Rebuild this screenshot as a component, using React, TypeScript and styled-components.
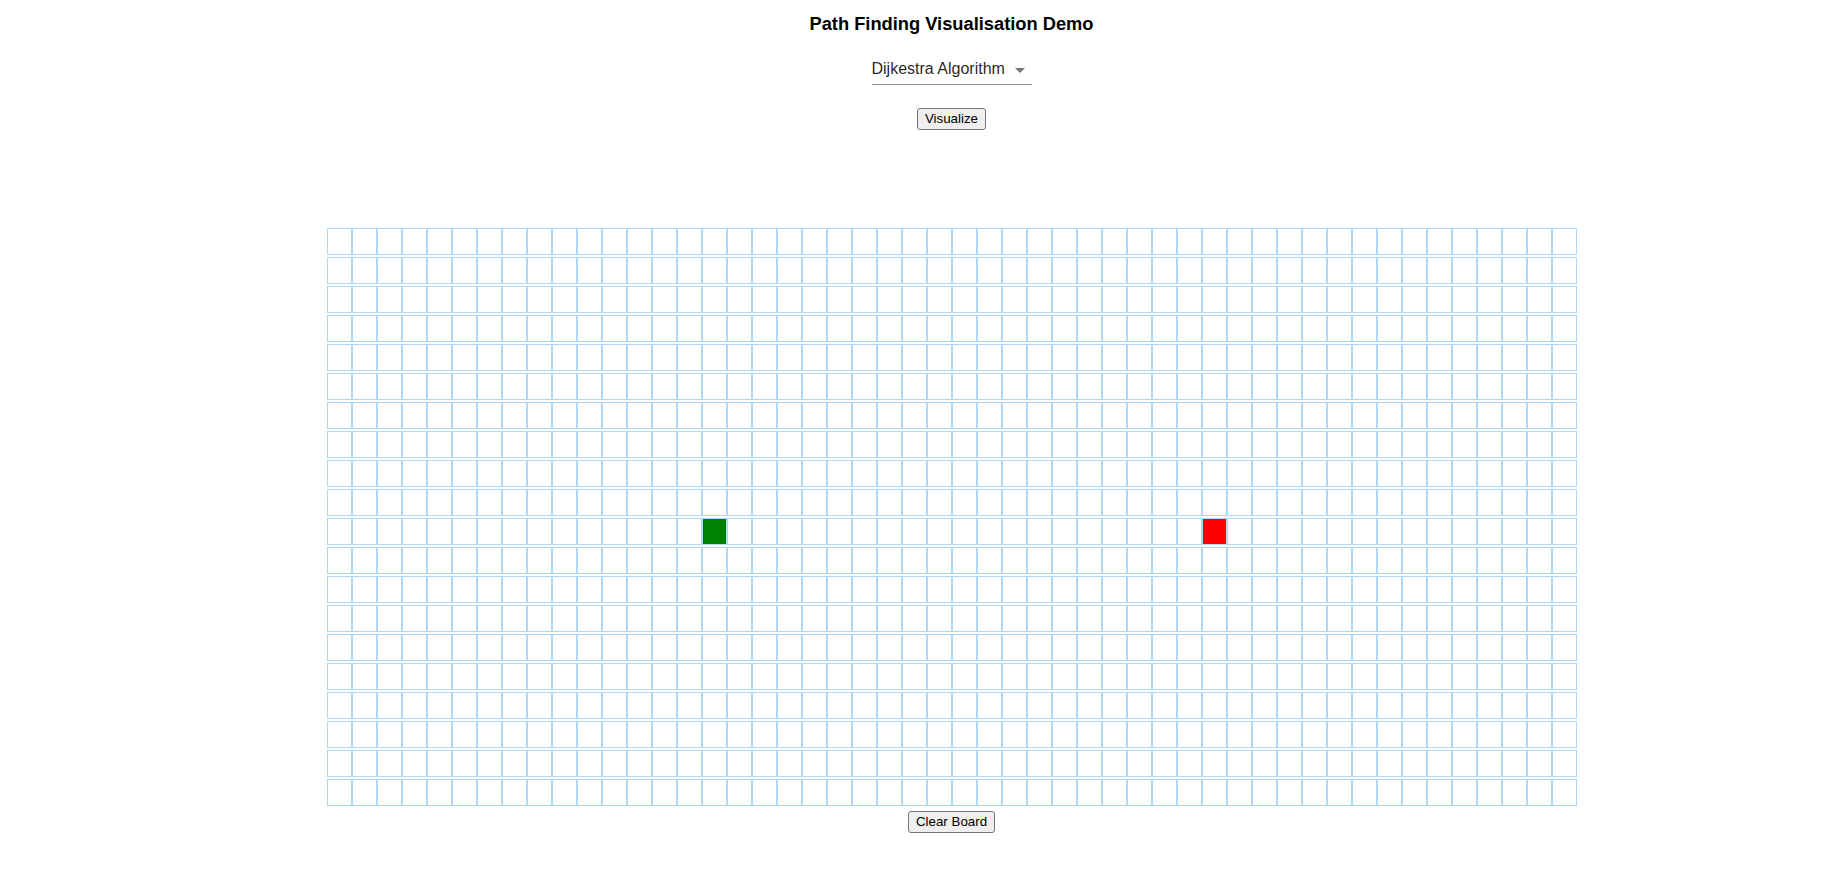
import React, { useState } from 'react';
import styled, { createGlobalStyle } from 'styled-components';

const GlobalStyle = createGlobalStyle`
  body {
    margin: 0;
    overflow: hidden;
    background: #ffffff;
    font-family: "Liberation Sans", Arial, sans-serif;
  }
`;

const ROWS = 20;
const COLS = 50;
const START = { row: 10, col: 15 };
const FINISH = { row: 10, col: 35 };

const Page = styled.div`
  width: 1903px;
  display: flex;
  flex-direction: column;
  align-items: center;
`;

const Title = styled.h3`
  margin: 13px 0 0;
  font-size: 18.3px;
  line-height: 22px;
  font-weight: 700;
  color: #000;
`;

const SelectRoot = styled.div`
  position: relative;
  width: 160px;
  margin-top: 21px;
  border-bottom: 1px solid rgba(0, 0, 0, 0.42);
  cursor: pointer;
`;

const SelectValue = styled.div`
  padding: 3px 24px 6px 0;
  font-size: 16px;
  line-height: 19px;
  color: rgba(0, 0, 0, 0.87);
  text-align: left;
  white-space: nowrap;
`;

const ArrowIcon = styled.svg`
  position: absolute;
  right: 0;
  top: calc(50% - 12px);
  width: 24px;
  height: 24px;
  fill: rgba(0, 0, 0, 0.54);
`;

const Button = styled.button<{ $mt: number }>`
  margin-top: ${p => p.$mt}px;
  padding: 2px 7px;
  font-family: "Liberation Sans", Arial, sans-serif;
  font-size: 13.333px;
  line-height: 16px;
  color: #000;
  background: #efefef;
  border: 1px solid #767676;
  border-radius: 3px;
  cursor: pointer;
`;

const Grid = styled.div`
  margin-top: 98px;
  display: flex;
  flex-direction: column;
  gap: 2px;
`;

const Row = styled.div`
  display: flex;
`;

const Cell = styled.div<{ $kind: 'start' | 'finish' | 'empty' }>`
  box-sizing: border-box;
  width: 25px;
  height: 27px;
  border: 1px solid rgb(175, 216, 248);
  background: ${p =>
    p.$kind === 'start' ? '#008000' : p.$kind === 'finish' ? '#ff0000' : '#ffffff'};
`;

const App: React.FC = () => {
  const [algorithm] = useState('Dijkestra Algorithm');

  const kindOf = (r: number, c: number) => {
    if (r === START.row && c === START.col) return 'start';
    if (r === FINISH.row && c === FINISH.col) return 'finish';
    return 'empty';
  };

  return (
    <Page>
      <GlobalStyle />
      <Title>Path Finding Visualisation Demo</Title>
      <SelectRoot>
        <SelectValue>{algorithm}</SelectValue>
        <ArrowIcon viewBox="0 0 24 24">
          <path d="M7 10l5 5 5-5z" />
        </ArrowIcon>
      </SelectRoot>
      <Button $mt={23}>Visualize</Button>
      <Grid>
        {[...Array(ROWS)].map((_, r) => (
          <Row key={r}>
            {[...Array(COLS)].map((_, c) => (
              <Cell key={c} $kind={kindOf(r, c)} />
            ))}
          </Row>
        ))}
      </Grid>
      <Button $mt={5}>Clear Board</Button>
    </Page>
  );
};

export default App;
